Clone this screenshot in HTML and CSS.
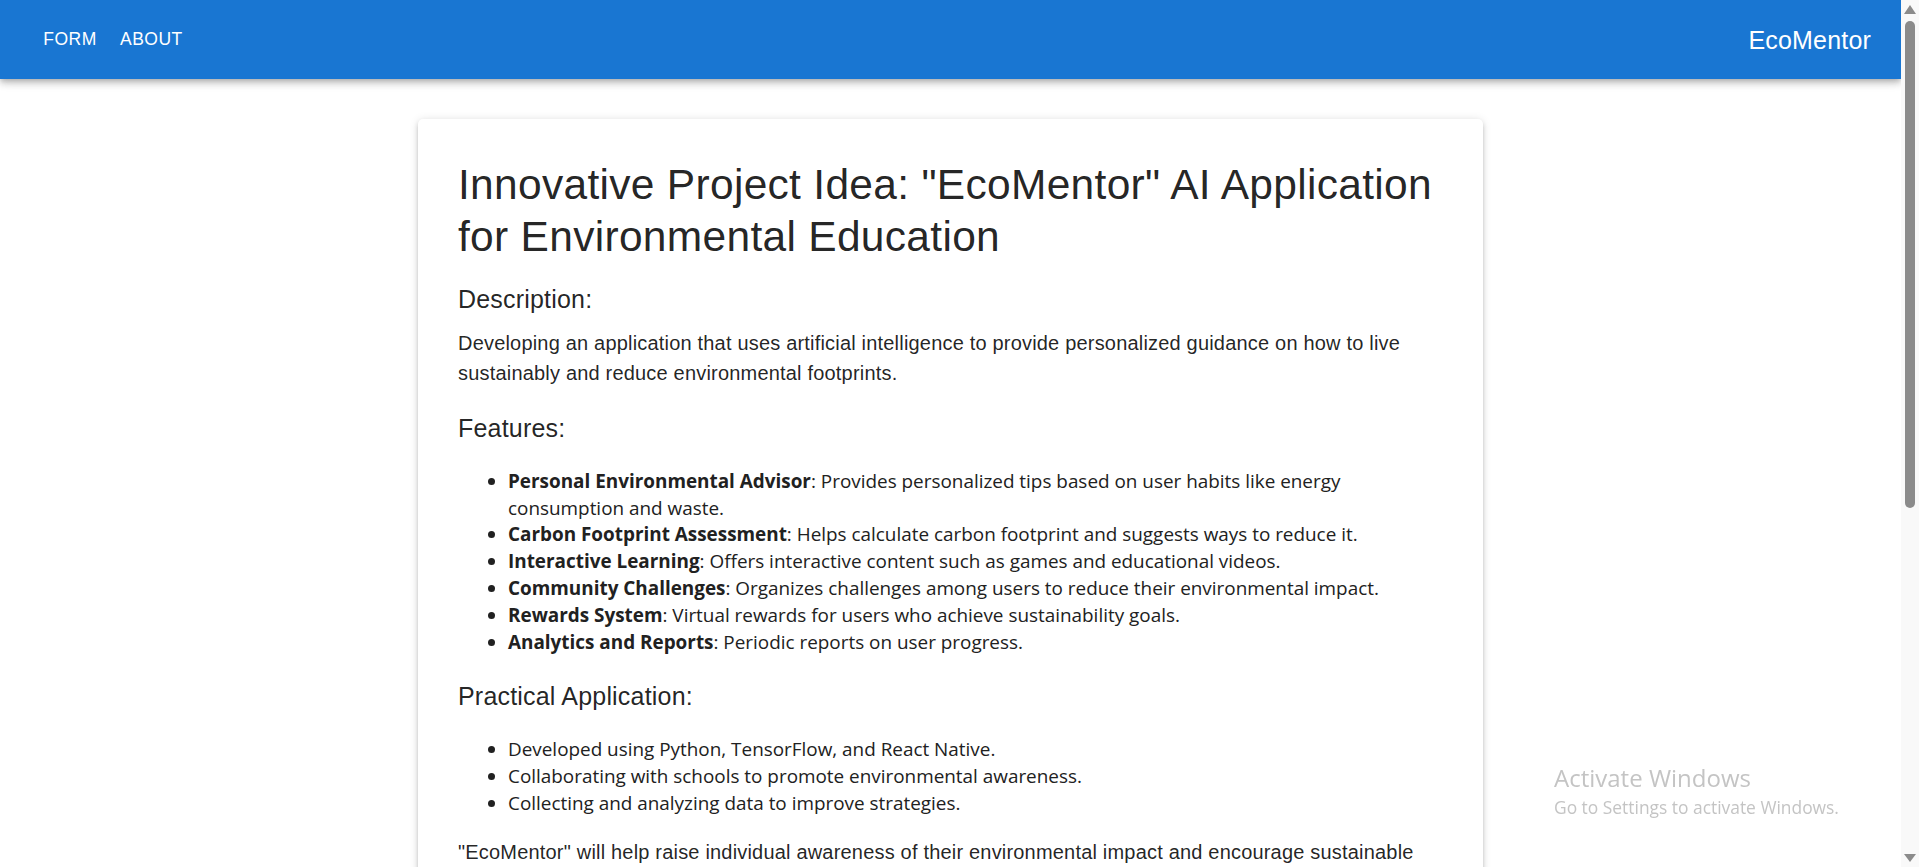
FILE: index.html
```html
<!DOCTYPE html>
<html lang="en">
<head>
<meta charset="utf-8">
<title>EcoMentor</title>
<link rel="stylesheet" href="styles.css">
</head>
<body>
<header class="appbar">
  <div class="toolbar">
    <nav class="nav">
      <a class="navbtn" href="#">Form</a>
      <a class="navbtn" href="#">About</a>
    </nav>
    <div class="brand">EcoMentor</div>
  </div>
</header>
<main class="container">
  <article class="card">
    <h1 class="title">Innovative Project Idea: "EcoMentor" AI Application for Environmental Education</h1>
    <h2 class="section">Description:</h2>
    <p class="body">Developing an application that uses artificial intelligence to provide personalized guidance on how to live sustainably and reduce environmental footprints.</p>
    <h2 class="section">Features:</h2>
    <ul class="list">
      <li><strong>Personal Environmental Advisor</strong>: Provides personalized tips based on user habits like energy consumption and waste.</li>
      <li><strong>Carbon Footprint Assessment</strong>: Helps calculate carbon footprint and suggests ways to reduce it.</li>
      <li><strong>Interactive Learning</strong>: Offers interactive content such as games and educational videos.</li>
      <li><strong>Community Challenges</strong>: Organizes challenges among users to reduce their environmental impact.</li>
      <li><strong>Rewards System</strong>: Virtual rewards for users who achieve sustainability goals.</li>
      <li><strong>Analytics and Reports</strong>: Periodic reports on user progress.</li>
    </ul>
    <h2 class="section">Practical Application:</h2>
    <ul class="list">
      <li>Developed using Python, TensorFlow, and React Native.</li>
      <li>Collaborating with schools to promote environmental awareness.</li>
      <li>Collecting and analyzing data to improve strategies.</li>
    </ul>
    <p class="body">"EcoMentor" will help raise individual awareness of their environmental impact and encourage sustainable behaviors in daily life.</p>
  </article>
</main>
<div class="scrollbar" aria-hidden="true">
  <span class="sb-arrow sb-up"></span>
  <span class="sb-thumb"></span>
  <span class="sb-arrow sb-down"></span>
</div>
<div class="watermark">
  <div class="wm-title">Activate Windows</div>
  <div class="wm-sub">Go to Settings to activate Windows.</div>
</div>
</body>
</html>
```

FILE: styles.css
```css
html, body {
  margin: 0;
  padding: 0;
}

body {
  margin-right: 18px;
  background: #ffffff;
  color: rgba(0, 0, 0, 0.87);
  font-family: "Liberation Sans", Arial, sans-serif;
}

.appbar {
  background: #1976d2;
  color: #ffffff;
  height: 79px;
  box-shadow: 0 2.5px 5px -1.25px rgba(0, 0, 0, 0.2),
              0 5px 6.25px 0 rgba(0, 0, 0, 0.14),
              0 1.25px 12.5px 0 rgba(0, 0, 0, 0.12);
  position: relative;
  z-index: 2;
}

.toolbar {
  height: 100%;
  display: flex;
  align-items: center;
  justify-content: space-between;
  padding: 0 30px;
}

.nav {
  display: flex;
}

.navbtn {
  min-width: 80px;
  box-sizing: border-box;
  padding: 7.5px 10px;
  color: #ffffff;
  text-decoration: none;
  text-transform: uppercase;
  text-align: center;
  font-size: 17.5px;
  line-height: 1.75;
  letter-spacing: 0.5px;
}

.brand {
  font-size: 25px;
  line-height: 1.6;
  letter-spacing: 0.19px;
}

.container {
  max-width: 1125px;
  box-sizing: border-box;
  margin: 0 auto;
  padding: 40px 30px;
}

.card {
  background: #ffffff;
  border-radius: 5px;
  padding: 40px;
  box-shadow: 0 3.75px 3.75px -2.5px rgba(0, 0, 0, 0.2),
              0 3.75px 5px 0 rgba(0, 0, 0, 0.14),
              0 1.25px 10px 0 rgba(0, 0, 0, 0.12);
}

.title {
  margin: 0 0 14.875px;
  font-size: 42.5px;
  line-height: 1.235;
  font-weight: 400;
  letter-spacing: 0.3px;
}

.section {
  margin: 0 0 8.75px;
  font-size: 25px;
  line-height: 1.6;
  font-weight: 400;
  letter-spacing: 0.19px;
}

.body {
  margin: 0 0 20px;
  font-size: 20px;
  line-height: 1.5;
  letter-spacing: 0.19px;
}

.list {
  margin: 20px 0;
  padding-left: 50px;
  font-family: "Open Sans", "Noto Sans", sans-serif;
  font-size: 18.9px;
  line-height: 26.9px;
  color: #212121;
}

.list strong {
  font-weight: 700;
}

.scrollbar {
  position: fixed;
  top: 0;
  right: 0;
  width: 18px;
  height: 100vh;
  background: #f9f9f9;
  display: flex;
  flex-direction: column;
  align-items: center;
  z-index: 5;
}

.sb-arrow {
  width: 0;
  height: 0;
  border-left: 6px solid transparent;
  border-right: 6px solid transparent;
}

.sb-up {
  margin-top: 5px;
  border-bottom: 9px solid #8b8b8b;
}

.sb-thumb {
  width: 10px;
  height: 487px;
  margin-top: 7px;
  border-radius: 5px;
  background: #8b8b8b;
}

.sb-down {
  margin-top: auto;
  margin-bottom: 5px;
  border-top: 8px solid #8b8b8b;
}

.watermark {
  position: fixed;
  left: 1554px;
  top: 761px;
  color: #c4c4c4;
  font-family: "Open Sans", "Noto Sans", sans-serif;
  pointer-events: none;
}

.wm-title {
  font-size: 24px;
  line-height: 34px;
}

.wm-sub {
  font-size: 17.4px;
  line-height: 24px;
}
```
